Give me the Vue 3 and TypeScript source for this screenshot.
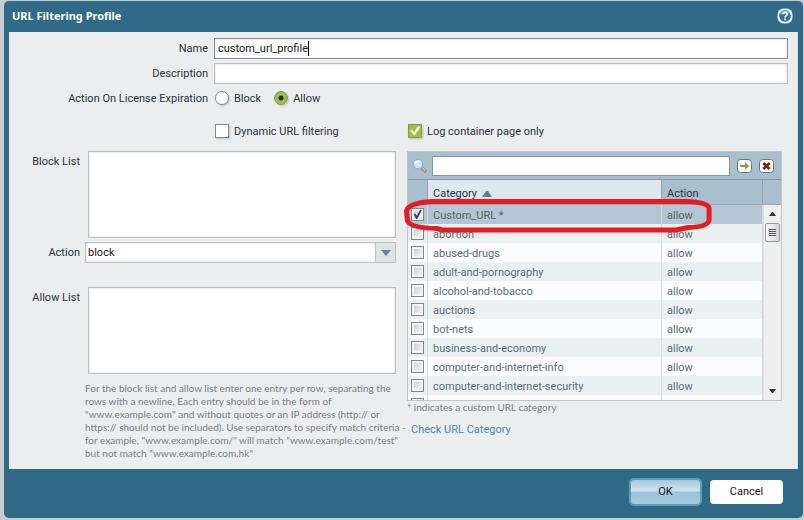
<script setup lang="ts">
import { ref } from 'vue'

interface CategoryRow {
  name: string
  action: string
  checked: boolean
}

const profileName = ref('custom_url_profile')
const description = ref('')
const expiration = ref<'block' | 'allow'>('allow')
const dynamicFiltering = ref(false)
const logContainer = ref(true)
const blockList = ref('')
const allowList = ref('')
const action = ref('block')
const search = ref('')

const names = [
  'Custom_URL *',
  'abortion',
  'abused-drugs',
  'adult-and-pornography',
  'alcohol-and-tobacco',
  'auctions',
  'bot-nets',
  'business-and-economy',
  'computer-and-internet-info',
  'computer-and-internet-security',
  '',
]

const rows = ref<CategoryRow[]>(
  names.map((name, i) => ({ name, action: name ? 'allow' : '', checked: i === 0 })),
)

const helpLines = [
  'For the block list and allow list enter one entry per row, separating the',
  'rows with a newline. Each entry should be in the form of',
  '"www.example.com" and without quotes or an IP address (http:// or',
  'https:// should not be included). Use separators to specify match criteria -',
  'for example, "www.example.com/" will match "www.example.com/test"',
  'but not match "www.example.com.hk"',
]
</script>

<template>
  <main class="page">
    <form class="dialog" @submit.prevent>
      <header class="title-bar">
        <h1>URL Filtering Profile</h1>
        <button class="help" type="button" aria-label="Help">
          <svg viewBox="0 0 16 16" width="16" height="16">
            <rect x="0.5" y="0.5" width="15" height="15" rx="6" fill="#e3f1f9" />
            <circle cx="8" cy="8" r="5.8" fill="#2b6f9c" />
            <path d="M3 7a5 5 0 0 1 10 0Q8 4.500 3 7Z" fill="#6ea5c4" />
            <path d="M6 6.300a2 2 0 1 1 3 1.700q-1 .6-1 1.500" fill="none" stroke="#fff" stroke-width="1.7" />
            <rect x="7.100" y="10.500" width="1.800" height="1.700" fill="#fff" />
          </svg>
        </button>
      </header>

      <div class="body">
        <div class="fields">
          <label for="name">Name</label>
          <div class="name-box">
            <input id="name" v-model="profileName" class="text focused" type="text" />
            <span class="caret"></span>
          </div>
          <label for="description">Description</label>
          <input id="description" v-model="description" class="text" type="text" />
          <span id="expiration" class="caption">Action On License Expiration</span>
          <div class="radios" role="radiogroup" aria-labelledby="expiration">
            <label><input v-model="expiration" type="radio" name="expiration" value="block" />Block</label>
            <label><input v-model="expiration" type="radio" name="expiration" value="allow" />Allow</label>
          </div>
        </div>

        <div class="columns options">
          <label class="option indented"><input v-model="dynamicFiltering" type="checkbox" />Dynamic URL filtering</label>
          <label class="option"><input v-model="logContainer" type="checkbox" />Log container page only</label>
        </div>

        <div class="columns">
          <section class="lists">
            <div class="list-row">
              <label for="block-list">Block List</label>
              <textarea id="block-list" v-model="blockList"></textarea>
            </div>
            <div class="list-row select-row">
              <label for="action">Action</label>
              <div class="select-box">
                <select id="action" v-model="action">
                  <option value="block">block</option>
                </select>
                <span class="arrow">
                  <svg viewBox="0 0 10 6" width="10" height="6"><path d="M0 0H10L5 6Z" fill="#6d818b" /></svg>
                </span>
              </div>
            </div>
            <div class="list-row">
              <label for="allow-list">Allow List</label>
              <textarea id="allow-list" v-model="allowList"></textarea>
            </div>
            <p class="hint">
              <template v-for="line in helpLines" :key="line">{{ line }}<br /></template>
            </p>
          </section>

          <section class="categories">
            <div class="grid">
              <div class="toolbar">
                <svg class="lens" viewBox="0 0 16 16" width="16" height="16">
                  <path d="M9.500 9.500l3.500 3.500" stroke="#b98352" stroke-width="3.400" stroke-linecap="round" />
                  <path d="M9.500 9l3.500 3.500" stroke="#efc79a" stroke-width="1.200" stroke-linecap="round" />
                  <circle cx="6" cy="6" r="4.800" fill="#d3eafa" stroke="#8fb8df" stroke-width="1.400" />
                  <path d="M3.500 6a2.500 2.500 0 0 1 3-2.500" fill="none" stroke="#fff" stroke-width="1.600" />
                </svg>
                <input v-model="search" class="search" type="text" aria-label="Search categories" />
                <button class="tool" type="button" aria-label="Apply filter">
                  <svg viewBox="0 0 15 14" width="15" height="14">
                    <rect x="0.500" y="0.500" width="14" height="13" rx="3" fill="#fff" stroke="#5f7488" />
                    <path d="M3 6H8V3.200L12.200 7L8 10.800V8H3Z" fill="#8a9c35" />
                  </svg>
                </button>
                <button class="tool" type="button" aria-label="Clear filter">
                  <svg viewBox="0 0 15 14" width="15" height="14">
                    <rect x="0.500" y="0.500" width="14" height="13" rx="3" fill="#fff" stroke="#5f7488" />
                    <path d="M4.300 4L10.700 10M10.700 4L4.300 10" stroke="#7d2415" stroke-width="2.800" />
                  </svg>
                </button>
              </div>
              <div class="viewport">
                <div class="table-box">
                  <table>
                    <colgroup>
                      <col class="col-check" />
                      <col />
                      <col class="col-action" />
                    </colgroup>
                    <thead>
                      <tr>
                        <th aria-label="Selected"></th>
                        <th class="sorted">
                          Category
                          <svg viewBox="0 0 10 6" width="10" height="6"><path d="M0 6L4 0H6L10 6Z" fill="#5e7d92" /></svg>
                        </th>
                        <th>Action</th>
                      </tr>
                    </thead>
                    <tbody>
                      <tr v-for="(row, i) in rows" :key="i" :class="{ selected: row.checked }">
                        <td><input v-model="row.checked" class="mini" type="checkbox" :aria-label="row.name" /></td>
                        <td>{{ row.name }}</td>
                        <td>{{ row.action }}</td>
                      </tr>
                    </tbody>
                  </table>
                </div>
                <div class="scroll">
                  <div class="scroll-head"></div>
                  <div class="track">
                    <svg viewBox="0 0 7 4" width="7" height="4"><path d="M0 4L3 0H4L7 4Z" fill="#333" /></svg>
                    <div class="thumb"><i></i><i></i><i></i><i></i></div>
                    <svg class="down" viewBox="0 0 7 4" width="7" height="4"><path d="M0 0H7L4 4H3Z" fill="#333" /></svg>
                  </div>
                </div>
              </div>
              <svg class="marker" viewBox="0 0 308 34" preserveAspectRatio="none">
                <path
                  d="M28 2.500H282Q303 3 305 9V21Q304 28 284 28.500L272 31H38L33 29.500Q7 29 3.500 22L2.500 12Q4 4 28 2.500Z"
                  fill="none" stroke="#e51c23" stroke-width="5" stroke-linejoin="round"
                />
              </svg>
            </div>
            <p class="note">* indicates a custom URL category</p>
            <a class="check-link" href="#">Check URL Category</a>
          </section>
        </div>
      </div>

      <footer class="actions">
        <button class="btn primary" type="submit">OK</button>
        <button class="btn" type="button">Cancel</button>
      </footer>
    </form>
  </main>
</template>

<style>
body {
  margin: 0;
  background: #c5cccf;
}
</style>

<style scoped>
* {
  box-sizing: border-box;
}

.page {
  display: flex;
  min-height: 100vh;
  padding: 1px 1px 2px 4px;
  font: 11px/15px Tahoma, Roboto, sans-serif;
  color: #2b3338;
}

input,
select,
textarea,
button {
  margin: 0;
  font: inherit;
  color: inherit;
}

.dialog {
  display: flex;
  flex: 1;
  flex-direction: column;
  min-width: 0;
  padding: 0 5px;
  border-radius: 5px;
  background: #306a87;
}

.title-bar {
  display: flex;
  justify-content: space-between;
  align-items: center;
  height: 31px;
  padding: 0 5px 2px 3px;
}

h1 {
  margin: 0;
  font-family: Tahoma, "Noto Sans", sans-serif;
  font-size: 11px;
  line-height: 14px;
  color: #fff;
}

.help,
.tool {
  display: flex;
  padding: 0;
  border: 0;
  background: none;
}

.body {
  flex: 1;
  padding-top: 6px;
  border-right: 1px solid #c9e0ea;
  background: #ebedef;
}

.fields {
  display: grid;
  grid-template-columns: 199px 1fr;
  gap: 4px 6px;
  align-items: center;
  padding-right: 9px;
}

.fields > label,
.caption {
  text-align: right;
  white-space: nowrap;
}

.name-box {
  position: relative;
}

.caret {
  position: absolute;
  top: 3px;
  left: 94px;
  width: 1px;
  height: 15px;
  background: #000;
}

.text {
  display: block;
  width: 100%;
  height: 21px;
  padding: 0 3px;
  border: 1px solid #bdbfc1;
  outline: 0;
  background: #fff;
  box-shadow: inset 0 0 2px #c8c8c8;
  color: #16191b;
}

.focused {
  border-color: #8d9092;
}

.radios {
  display: flex;
  gap: 12px;
  height: 20px;
}

.radios label,
.option {
  display: flex;
  align-items: center;
  gap: 5px;
  padding-left: 1px;
  white-space: nowrap;
}

input[type='radio'],
input[type='checkbox'] {
  flex: none;
  width: 14px;
  height: 14px;
  appearance: none;
  border: 1px solid #83898d;
  background: #fff;
  box-shadow: 1px 1px 2px #bcc0c3;
}

input[type='radio'] {
  border-radius: 50%;
}

input[type='radio']:checked {
  background: radial-gradient(circle, #24300c 0 2px, #a4bf3c 3px);
}

.option input[type='checkbox']:checked {
  border-color: #8a9a54;
  background: #a4bf3c;
}

.option input[type='checkbox']:checked::before {
  content: '';
  display: block;
  height: 12px;
  background: #fff;
  clip-path: polygon(10% 48%, 25% 38%, 42% 60%, 78% 8%, 94% 18%, 45% 88%);
}

.columns {
  display: grid;
  grid-template-columns: minmax(0, 387fr) minmax(0, 375fr);
  column-gap: 11px;
  padding-right: 15px;
}

.options {
  height: 43px;
  padding-top: 15px;
  align-items: start;
}

.option {
  height: 16px;
}

.indented {
  padding-left: 206px;
}

.lists {
  display: flex;
  flex-direction: column;
}

.list-row {
  display: grid;
  grid-template-columns: 71px 1fr;
  gap: 8px;
}

.list-row label {
  padding-top: 3px;
  text-align: right;
}

.select-row {
  gap: 5px;
  margin: 4px 0 24px;
}

textarea {
  display: block;
  width: 100%;
  height: 87px;
  resize: none;
  border: 1px solid #bdbfc1;
  background: #fff;
  box-shadow: inset 0 0 2px #c8c8c8;
}

.select-box {
  display: flex;
  height: 21px;
  border: 1px solid #bdbfc1;
  background: #fff;
  box-shadow: inset 0 0 2px #c8c8c8;
}

select {
  flex: 1;
  min-width: 0;
  padding: 0 2px;
  appearance: none;
  border: 0;
  background: none;
  color: #16191b;
}

.arrow {
  display: flex;
  justify-content: center;
  align-items: center;
  width: 20px;
  border-left: 1px solid #bdbfc1;
  background: #e1e2e3;
}

.hint,
.note {
  margin: 0;
  font-family: Tahoma, Lato, sans-serif;
  font-size: 10px;
  line-height: 13px;
  color: #7d7f81;
  white-space: nowrap;
}

.hint {
  padding: 8px 0 0 76px;
}

.grid {
  position: relative;
  border: 1px solid #c0c6ca;
}

.toolbar {
  display: flex;
  align-items: center;
  gap: 7px;
  height: 28px;
  padding: 0 7px 0 4px;
  border-bottom: 1px solid #8499a7;
  background: #a9bfce;
}

.search {
  flex: 1;
  min-width: 0;
  height: 20px;
  padding: 0 3px;
  border: 1px solid #8298a6;
  background: #fff;
}

.lens,
.tool {
  flex: none;
}

.lens {
  margin-right: -3px;
}

.viewport {
  display: flex;
  height: 220px;
  overflow: hidden;
}

.table-box {
  flex: 1;
  min-width: 0;
}

table {
  width: 100%;
  table-layout: fixed;
  border-collapse: separate;
  border-spacing: 0;
}

.col-check {
  width: 20px;
}

.col-action {
  width: 101px;
}

th {
  height: 25px;
  padding: 2px 5px 0;
  border-right: 1px solid #8fa5b4;
  border-bottom: 1px solid #94a9b7;
  background: #a9bfce;
  font-weight: normal;
  text-align: left;
}

.sorted {
  background: #dde8ef;
}

.sorted svg {
  margin-left: 2px;
}

td {
  height: 19px;
  padding: 2px 5px 0;
  border-right: 1px solid #d3d9dd;
  background: #fafcfd;
  color: #5f6c78;
  white-space: nowrap;
}

tr:nth-child(even) td {
  background: #ebf0f3;
}

tr.selected td {
  background: #b3c6d4;
  color: #52645f;
}

td:first-child {
  padding: 0 0 0 3px;
}

input.mini {
  display: block;
  width: 13px;
  height: 13px;
  border-color: #82878b;
  background: linear-gradient(135deg, #c4c8cb, #fafafa);
  box-shadow: inset 0 0 0 2px #f3f4f5;
}

input.mini:checked::before {
  content: '';
  display: block;
  height: 11px;
  background: #33437d;
  clip-path: polygon(14% 46%, 30% 42%, 42% 62%, 76% 4%, 90% 10%, 48% 92%, 36% 90%);
}

.scroll {
  display: flex;
  flex-direction: column;
  width: 18px;
}

.scroll-head {
  height: 25px;
  border-bottom: 1px solid #94a9b7;
  background: #a9bfce;
}

.track {
  display: flex;
  flex: 1;
  flex-direction: column;
  align-items: center;
  padding: 7px 0;
  border-left: 1px solid #dcdfe1;
  background: #efeff0;
}

.thumb {
  display: grid;
  align-content: center;
  justify-content: center;
  gap: 1px;
  width: 15px;
  height: 19px;
  margin-top: 7px;
  border: 1px solid #989b9e;
  border-radius: 2px;
  background: linear-gradient(90deg, #f7f7f7, #d3d5d7);
}

.thumb i {
  width: 7px;
  height: 1px;
  background: #555b60;
}

.down {
  margin-top: auto;
}

.marker {
  position: absolute;
  top: 47px;
  left: -4px;
  width: 82.6%;
  height: 34px;
  pointer-events: none;
}

.check-link {
  display: inline-block;
  padding: 8px 0 0 4px;
  color: #4f8aa8;
  text-decoration: none;
}

.actions {
  display: flex;
  justify-content: flex-end;
  align-items: center;
  gap: 8px;
  height: 49px;
  padding: 0 15px 4px 0;
}

.btn {
  width: 73px;
  height: 24px;
  padding: 0;
  border: 0;
  border-radius: 4px;
  background: #fff;
  color: #14181a;
}

.primary {
  height: 28px;
  border: 2px solid #5b9cbd;
  border-radius: 5px;
  background: linear-gradient(#a3c8da, #cfe2ec 45%, #9cc3d7 52%, #a2c8da);
}
</style>
